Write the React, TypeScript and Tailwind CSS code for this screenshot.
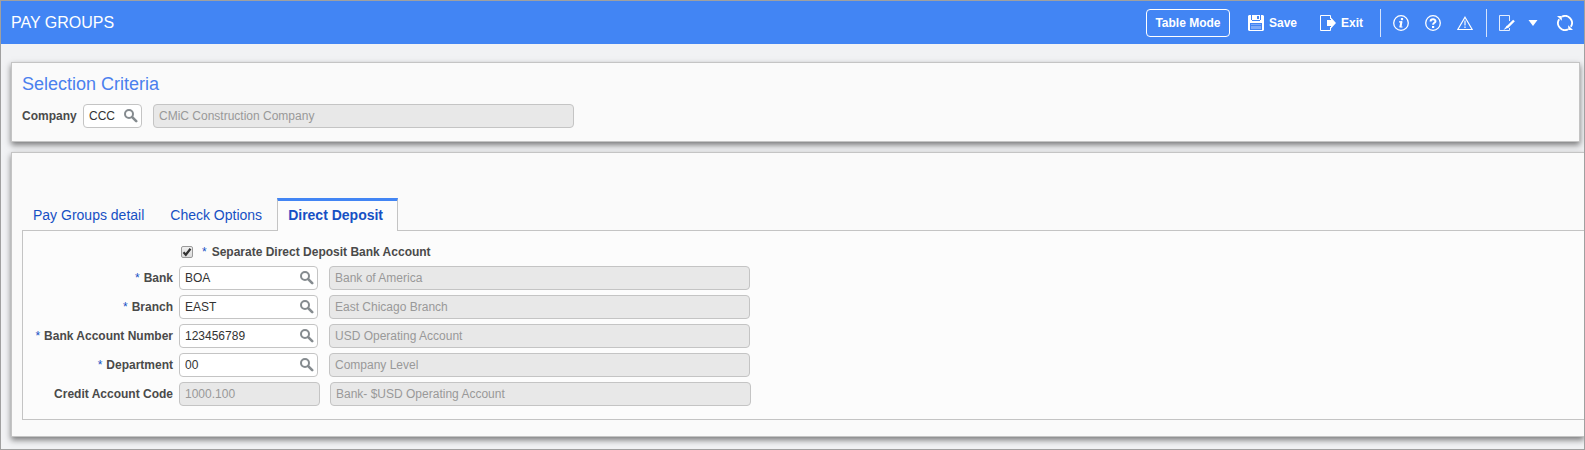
import type { ReactNode } from "react";

type LookupRow = {
  id: string;
  label: string;
  value: string;
  description: string;
  required?: boolean;
  readOnly?: boolean;
};

const TABS = ["Pay Groups detail", "Check Options", "Direct Deposit"];
const ACTIVE_TAB = "Direct Deposit";

const ROWS: LookupRow[] = [
  { id: "bank", label: "Bank", value: "BOA", description: "Bank of America", required: true },
  { id: "branch", label: "Branch", value: "EAST", description: "East Chicago Branch", required: true },
  { id: "account", label: "Bank Account Number", value: "123456789", description: "USD Operating Account", required: true },
  { id: "department", label: "Department", value: "00", description: "Company Level", required: true },
  { id: "credit", label: "Credit Account Code", value: "1000.100", description: "Bank- $USD Operating Account", readOnly: true },
];

// Icons
function SaveIcon() {
  return (
    <svg width="16" height="16" viewBox="0 0 16 16" aria-hidden="true">
      <path d="M1 0h14l1 1v14l-1 1H1l-1-1V1z" fill="#fff" />
      <path d="M3 0h1v5H3zM12 0h1v5h-1zM4 5h8v1H4zM9 1h2v3H9z" fill="#4285f4" />
      <path d="M2 8h12v7H2z" fill="#4285f4" />
      <path d="M3 9h10v1H3zM3 11h10v3H3z" fill="#7fabf8" />
    </svg>
  );
}

function ExitIcon() {
  return (
    <svg width="16" height="16" viewBox="0 0 16 16" aria-hidden="true">
      <path d="M10.500 4V.5H.5v15h10V12" fill="none" stroke="#fff" />
      <path d="M7 5h4V2.500L16 8l-5 5.500V11H7z" fill="#fff" />
    </svg>
  );
}

function InfoIcon() {
  return (
    <svg width="16" height="16" viewBox="0 0 16 16" fill="none" stroke="#fff" aria-hidden="true">
      <circle cx="8" cy="8" r="7.300" strokeWidth="1.300" />
      <path d="M6 6.800h2.500M8.700 6.200 7.300 12M6.500 12h3" strokeWidth="1.200" />
      <path d="M8.500 6.500 7.400 12" strokeWidth="2" />
      <path d="M7.900 4.100h2.200" strokeWidth="2.200" />
    </svg>
  );
}

function HelpIcon() {
  return (
    <svg width="16" height="16" viewBox="0 0 16 16" fill="none" stroke="#fff" aria-hidden="true">
      <circle cx="8" cy="8" r="7.300" strokeWidth="1.300" />
      <path d="M5.600 6.400C5.600 3.600 10.500 3.600 10.500 6.200c0 1.600-2.400 1.600-2.400 3.500" strokeWidth="2" />
      <path d="M7 12h2.200" strokeWidth="2" />
    </svg>
  );
}

function WarningIcon() {
  return (
    <svg width="16" height="16" viewBox="0 0 16 16" fill="none" stroke="#fff" aria-hidden="true">
      <path d="M8 2.200 15.200 14.500H.8z" strokeWidth="1.200" />
      <path d="M8 5.500v5M8 11.500v1.500" strokeWidth="2" opacity=".6" />
    </svg>
  );
}

function EditIcon() {
  return (
    <svg width="16" height="16" viewBox="0 0 16 16" fill="none" stroke="#fff" aria-hidden="true">
      <path d="M10.500 6V.5H.5v15h10V13" opacity=".85" />
      <path d="M15 5.500 8 12.500" strokeWidth="2.400" />
      <path d="M8 10.500 4.500 15l4.800-2.500z" fill="#fff" stroke="none" />
    </svg>
  );
}

function RefreshIcon() {
  return (
    <svg width="16" height="16" viewBox="0 0 16 16" fill="none" stroke="#fff" strokeWidth="1.800" aria-hidden="true">
      <path d="M5 1.600A7 7 0 0 1 13.800 11.800" />
      <path d="M11 14.400A7 7 0 0 1 2.200 4.200" />
      <path d="M11.200 10.200V15H16zM4.800 5.800V1H0z" fill="#fff" stroke="none" />
    </svg>
  );
}

function SearchIcon() {
  return (
    <svg width="14" height="14" viewBox="0 0 14 14" fill="none" stroke="#858b8f" aria-hidden="true">
      <circle cx="5" cy="5" r="4" strokeWidth="2" />
      <path d="m8.200 8.200 4 4" strokeWidth="2.600" strokeLinecap="round" />
    </svg>
  );
}

function IconButton({ label, children }: { label: string; children: ReactNode }) {
  return (
    <button type="button" aria-label={label} className="flex size-4 items-center justify-center">
      {children}
    </button>
  );
}

function LookupInput({ id, value, className }: { id: string; value: string; className: string }) {
  return (
    <div className={`flex h-6 items-center rounded border border-[#c4c4c4] bg-white ${className}`}>
      <input id={id} defaultValue={value} className="h-full w-0 min-w-0 flex-1 pl-[5px] text-[#333] outline-none" />
      <button type="button" aria-label={`Search ${id}`} className="mr-[3px] shrink-0">
        <SearchIcon />
      </button>
    </div>
  );
}

function ReadOnlyInput({ label, value, className, id }: { label?: string; value: string; className: string; id?: string }) {
  return (
    <input
      id={id}
      aria-label={label}
      value={value}
      readOnly
      className={`h-6 rounded border border-[#c4c4c4] bg-[#e8e8e8] px-[5px] text-[#999] outline-none ${className}`}
    />
  );
}

function Header() {
  return (
    <header className="flex h-[43px] items-center justify-between bg-[#4285f4] pr-[11px] pl-2.5 text-white">
      <h1 className="text-base">PAY GROUPS</h1>
      <div className="flex items-center font-bold">
        <button type="button" className="h-7 w-[84px] rounded border border-white">
          Table Mode
        </button>
        <button type="button" className="ml-[18px] flex items-center gap-[5px]">
          <SaveIcon />
          Save
        </button>
        <button type="button" className="ml-[23px] flex items-center gap-[5px]">
          <ExitIcon />
          Exit
        </button>
        <div className="ml-[17px] flex h-7 items-center gap-4 border-l border-[#d5e3fc] pl-3">
          <IconButton label="Information">
            <InfoIcon />
          </IconButton>
          <IconButton label="Help">
            <HelpIcon />
          </IconButton>
          <IconButton label="Warnings">
            <WarningIcon />
          </IconButton>
        </div>
        <div className="ml-[13px] flex h-7 items-center border-l border-[#d5e3fc] pl-3">
          <IconButton label="Edit">
            <EditIcon />
          </IconButton>
          <button type="button" aria-label="More edit options" className="ml-3 flex w-3 justify-center">
            <svg width="10" height="6" viewBox="0 0 10 6" aria-hidden="true">
              <path d="M.5 0h9L5 6z" fill="#fff" />
            </svg>
          </button>
          <div className="ml-[18px]">
            <IconButton label="Refresh">
              <RefreshIcon />
            </IconButton>
          </div>
        </div>
      </div>
    </header>
  );
}

export default function App() {
  return (
    <div className="overflow-hidden border border-[#a0a0a0] bg-[#f1f2f4] pb-3 font-['Liberation_Sans',Arial,sans-serif] text-xs text-[#4a4a4a]">
      <Header />

      <section className="mt-[18px] mr-1 ml-2.5 border border-[#c4c4c4] bg-[#fafafa] px-2.5 pt-2.5 pb-[13px] shadow-[0_3px_6px_rgba(0,0,0,0.5)]">
        <h2 className="text-lg leading-[22px] text-[#4a80ee]">Selection Criteria</h2>
        <div className="mt-[9px] flex items-center">
          <label htmlFor="company" className="w-[61px] font-bold">
            Company
          </label>
          <LookupInput id="company" value="CCC" className="w-[59px]" />
          <ReadOnlyInput label="Company name" value="CMiC Construction Company" className="ml-[11px] w-[421px]" />
        </div>
      </section>

      <section className="mt-2.5 ml-2.5 border border-r-0 border-[#c4c4c4] bg-[#fafafa] pt-[45px] pb-4 pl-2.5 shadow-[0_3px_6px_rgba(0,0,0,0.5)]">
        <div role="tablist" className="relative z-10 -mb-px flex h-[33px] text-sm text-[#1650c4]">
          {TABS.map((tab) => (
            <button
              key={tab}
              type="button"
              role="tab"
              aria-selected={tab === ACTIVE_TAB}
              className={
                tab === ACTIVE_TAB
                  ? "border-x border-t-3 border-x-[#c4c4c4] border-t-[#4285f4] bg-[#fcfcfc] pr-3.5 pb-0.5 pl-2.5 font-bold"
                  : "pt-px pr-[15px] pl-[11px]"
              }
            >
              {tab}
            </button>
          ))}
        </div>

        <form className="border border-r-0 border-[#c4c4c4] bg-[#fcfcfc] pt-[11px] pb-[13px]">
          <div className="mb-[5px] flex h-[19px] items-center pl-[158px]">
            <input
              id="separate"
              type="checkbox"
              defaultChecked
              className="peer size-3 shrink-0 appearance-none rounded-xs border border-[#9a9a9a] bg-linear-to-b from-[#efefef] to-[#dcdcdc]"
            />
            <svg
              viewBox="0 0 12 12"
              className="pointer-events-none invisible -ml-3 size-3 peer-checked:visible"
              fill="none"
              stroke="#333"
              strokeWidth="2.200"
              aria-hidden="true"
            >
              <path d="m2.500 6.300 2.300 2.500 4.700-6" />
            </svg>
            <label htmlFor="separate" className="ml-[9px] font-bold">
              <span className="mr-[5px] font-normal text-[#1650c4]">*</span>
              Separate Direct Deposit Bank Account
            </label>
          </div>

          <div className="flex flex-col gap-[5px]">
            {ROWS.map((row) => (
              <div key={row.id} className="flex items-center">
                <label htmlFor={row.id} className="mr-1.5 w-[150px] text-right font-bold">
                  {row.required && <span className="mr-1 font-normal text-[#1650c4]">*</span>}
                  {row.label}
                </label>
                {row.readOnly ? (
                  <ReadOnlyInput id={row.id} value={row.value} className="w-[141px]" />
                ) : (
                  <LookupInput id={row.id} value={row.value} className="w-[139px]" />
                )}
                <ReadOnlyInput
                  label={`${row.label} description`}
                  value={row.description}
                  className={row.readOnly ? "ml-2.5 w-[421px]" : "ml-[11px] w-[421px]"}
                />
              </div>
            ))}
          </div>
        </form>
      </section>
    </div>
  );
}
